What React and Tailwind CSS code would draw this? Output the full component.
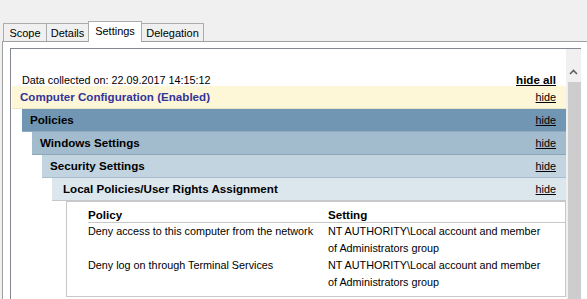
function Tab({ children, className = '' }) {
  return (
    <div
      className={`mb-px flex h-[18px] items-center justify-center border border-b-0 border-[#acacac] bg-[#f0f0f0] pt-[2px] ${className}`}
    >
      {children}
    </div>
  )
}

function Section({ label, indent, pad, bg, line, color = 'text-black' }) {
  return (
    <div
      className={`flex h-[23px] items-center justify-between border-b pr-[10px] ${indent} ${pad} ${bg} ${line}`}
    >
      <span className={`text-[11.6px] font-bold ${color}`}>{label}</span>
      <span className="text-[10.8px] underline">hide</span>
    </div>
  )
}

const rows = [
  {
    policy: 'Deny access to this computer from the network',
    setting: ['NT AUTHORITY\\Local account and member', 'of Administrators group'],
  },
  {
    policy: 'Deny log on through Terminal Services',
    setting: ['NT AUTHORITY\\Local account and member', 'of Administrators group'],
  },
]

export default function App() {
  return (
    <div className="h-[299px] w-[587px] overflow-hidden bg-[#f0f0f0] font-['Liberation_Sans',Arial,sans-serif] text-black">
      <div className="h-[21px]" />

      {/* Tabs */}
      <div className="relative z-10 -mb-px flex h-[21px] items-end pl-[3px] text-[11px]">
        <Tab className="w-[44px]">Scope</Tab>
        <Tab className="-ml-px w-[43px]">Details</Tab>
        <div className="-ml-px flex h-[21px] w-[54px] items-center justify-center border border-b-0 border-[#acacac] bg-white pb-[1px]">
          Settings
        </div>
        <Tab className="-ml-px w-[63px]">Delegation</Tab>
      </div>

      {/* Tab panel */}
      <div className="ml-[2px] h-[258px] border-l border-t border-[#a0a0a0] bg-white pl-[7px] pt-[6px]">
        <div className="flex h-[300px] w-[571px] border-l border-t border-[#828790]">
          <div className="w-[555px] pl-[1px] pt-[25px]">
            <div className="flex h-[12px] items-center justify-between px-[10px]">
              <span className="text-[10.8px]">Data collected on: 22.09.2017 14:15:12</span>
              <span className="text-[11.6px] font-bold underline">hide all</span>
            </div>

            <Section
              label="Computer Configuration (Enabled)"
              indent="ml-0"
              pad="pl-[8px]"
              bg="bg-[#fdf6d7]"
              line="border-[#ebe3c3]"
              color="text-[#33339a]"
            />
            <Section label="Policies" indent="ml-[10px]" pad="pl-[8px]" bg="bg-[#7096b3]" line="border-[#8eabc2]" />
            <Section label="Windows Settings" indent="ml-[20px]" pad="pl-[8px]" bg="bg-[#a2bccd]" line="border-[#8ea5b6]" />
            <Section label="Security Settings" indent="ml-[30px]" pad="pl-[8px]" bg="bg-[#c2d4df]" line="border-[#a9bccb]" />
            <Section
              label="Local Policies/User Rights Assignment"
              indent="ml-[40px]"
              pad="pl-[11px]"
              bg="bg-[#dce6ed]"
              line="border-[#c4c8cc]"
            />

            {/* Settings table */}
            <div className="ml-[54px] border border-[#c8c8c8] bg-white pb-[5px] pt-[4px] text-[10.8px] leading-[17px]">
              <div className="ml-[21px]">
                <div className="flex h-[17px] border-b border-[#c8c8c8] text-[11.6px] font-bold">
                  <div className="w-[240px]">Policy</div>
                  <div>Setting</div>
                </div>
                {rows.map((r, i) => (
                  <div key={i} className="flex">
                    <div className="w-[240px]">{r.policy}</div>
                    <div>
                      {r.setting.map((s) => (
                        <div key={s}>{s}</div>
                      ))}
                    </div>
                  </div>
                ))}
              </div>
            </div>
          </div>

          {/* Scrollbar */}
          <div className="flex w-[15px] flex-col bg-[#f0f0f0]">
            <div className="flex h-[33px] items-end justify-center pb-[7px]">
              <svg width="9" height="6" viewBox="0 0 9 6">
                <polyline points="1,5 4.5,1.5 8,5" fill="none" stroke="#606060" strokeWidth="1.6" />
              </svg>
            </div>
            <div className="ml-[2px] flex-1 bg-[#cdcdcd]" />
          </div>
        </div>
      </div>
    </div>
  )
}
